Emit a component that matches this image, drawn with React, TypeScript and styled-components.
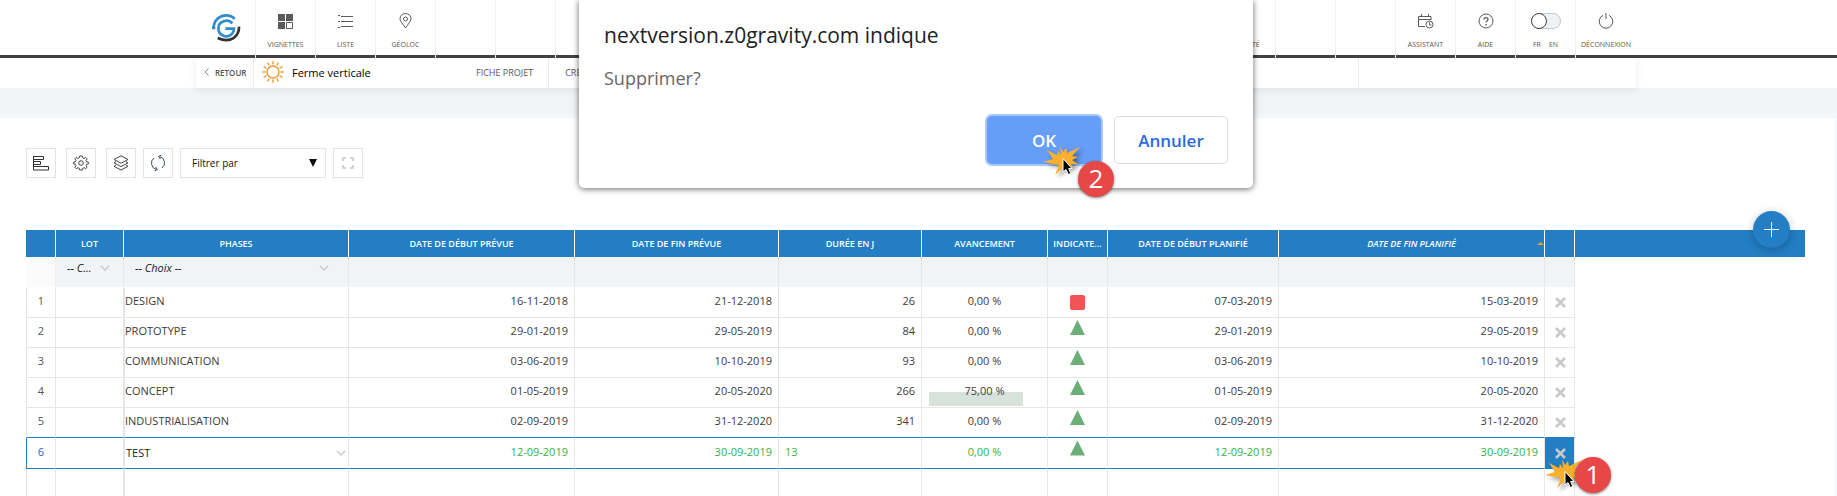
import React from "react";
import styled, { createGlobalStyle, css } from "styled-components";

const blue = "#237ec4";
const line = "#e6e6e6";
const pale = "#f0f4f6";
const gutter = "5px";

const Global = createGlobalStyle`
  *, *::before, *::after { box-sizing: border-box; }
  body { margin: 0; background: #fff; color: #3c3c3c; overflow-x: hidden;
    font-family: "Open Sans", "Noto Sans", sans-serif; font-size: 11px; }
  button, select, input { font: inherit; color: inherit; margin: 0; padding: 0; border: 0; background: none; border-radius: 0; }
  button, select { cursor: pointer; }
  a { color: inherit; text-decoration: none; }
  svg { display: block; flex: none; }
`;

const Page = styled.div`
  position: relative;
  overflow: hidden;
`;

/* ---------- top bar ---------- */

const Header = styled.header`
  padding-right: ${gutter};
  background: linear-gradient(#fff 55px, #424142 55px);
`;

const HeaderInner = styled.nav`
  display: flex;
  justify-content: space-between;
  max-width: 1440px;
  height: 58px;
  margin: 0 auto;
`;

const HeaderGroup = styled.div`
  display: flex;
`;

const cell = css<{ $last?: boolean }>`
  display: flex;
  flex-direction: column;
  align-items: center;
  gap: 10px;
  width: 60px;
  height: 58px;
  padding-top: 13px;
  border-right: ${(p) => (p.$last ? "0" : "1px solid #f0f0f0")};
  color: #555;
  font-size: 7px;
  line-height: 12px;
  white-space: nowrap;
`;

const HeaderLink = styled.a<{ $last?: boolean }>`${cell}`;
const HeaderCell = styled.div<{ $last?: boolean }>`${cell}`;

const IconSlot = styled.span`
  display: grid;
  place-items: center;
  height: 16px;
`;

const SwitchInput = styled.input`
  appearance: none;
  display: block;
  width: 30px;
  height: 16px;
  border: 1px solid #c3cace;
  border-radius: 8px;
  background: #eef2f5;
  &::before {
    content: "";
    display: block;
    width: 16px;
    height: 16px;
    margin: -1px;
    border: 1px solid #444;
    border-radius: 50%;
    background: #fff;
  }
`;

const Languages = styled.label`
  display: flex;
  gap: 8px;
`;

/* ---------- project bar ---------- */

const SubBar = styled.div`
  position: relative;
  padding-right: ${gutter};
  background: #fff;
`;

const SubInner = styled.nav`
  display: flex;
  align-items: stretch;
  max-width: 1440px;
  height: 30px;
  margin: 0 auto;
  box-shadow: 0 2px 8px rgba(0, 0, 0, 0.07);
  clip-path: inset(0 -10px -10px -10px);
`;

const BackLink = styled.a`
  display: flex;
  align-items: center;
  gap: 6px;
  width: 58px;
  padding: 0 0 2px 8px;
  border-right: 1px solid #ececec;
  color: #555;
  font-size: 8px;
  font-weight: 600;
`;

const ProjectName = styled.h1`
  display: flex;
  align-items: center;
  gap: 8px;
  width: 206px;
  margin: 0;
  padding: 0 0 2px 8px;
  color: #000;
  font-size: 11px;
  font-weight: 400;
`;

const Tab = styled.a`
  display: flex;
  align-items: center;
  padding: 0 15px 2px 16px;
  border-right: 1px solid #ececec;
  color: #555;
  font-size: 9px;
  white-space: nowrap;
`;

const TabsRest = styled.div`
  width: 278px;
  margin-left: auto;
  border-left: 1px solid #ececec;
`;

const Band = styled.div`
  height: 30px;
  border-bottom: 5px solid #f4f7f9;
  background: ${pale};
`;

/* ---------- content ---------- */

const Main = styled.main`
  padding: 30px 30px 0 26px;
  border-right: 2px solid #f4f7f9;
`;

const Toolbar = styled.div`
  display: flex;
  gap: 7px;
`;

const ToolGroup = styled.div`
  display: flex;
  gap: 10px;
`;

const ToolButton = styled.button`
  display: grid;
  place-items: center;
  width: 30px;
  height: 30px;
  border: 1px solid #dfe4e6;
`;

const FilterLabel = styled.label`
  position: relative;
  width: 146px;
`;

const FilterSelect = styled.select`
  appearance: none;
  width: 100%;
  height: 30px;
  padding: 0 28px 0 11px;
  border: 1px solid #dfe4e6;
  color: #111;
  font-size: 10px;
`;

const FilterArrow = styled.svg`
  position: absolute;
  top: 11px;
  right: 9px;
  pointer-events: none;
`;

const GridArea = styled.section`
  position: relative;
  margin-top: 52px;
`;

const AddButton = styled.button`
  position: absolute;
  top: -19px;
  right: 15px;
  display: grid;
  place-items: center;
  width: 37px;
  height: 37px;
  border-radius: 50%;
  background: ${blue};
  box-shadow: 0 2px 10px rgba(0, 0, 0, 0.25);
`;

const Table = styled.table`
  width: 100%;
  table-layout: fixed;
  border-collapse: separate;
  border-spacing: 0;
`;

const Col = styled.col<{ $w?: number }>`
  width: ${(p) => (p.$w ? p.$w + "px" : "auto")};
`;

const Th = styled.th<{ $sorted?: boolean; $rest?: boolean }>`
  position: relative;
  height: 27px;
  padding: 0;
  border-right: ${(p) => (p.$rest ? "0" : "1px solid #fff")};
  background: ${blue};
  color: #fff;
  font-size: 9px;
  font-weight: 600;
  font-style: ${(p) => (p.$sorted ? "italic" : "normal")};
  white-space: nowrap;
`;

const SortArrow = styled.svg`
  position: absolute;
  right: 0;
  top: 12px;
`;

const FilterCell = styled.td<{ $corner?: boolean }>`
  height: 31px;
  padding: 0;
  border-right: 1px solid ${(p) => (p.$corner ? "#f0f0f0" : line)};
  border-bottom: 1px solid #fff;
  background: ${(p) => (p.$corner ? "#fbfbfb" : pale)};
  vertical-align: top;
`;

const Picker = styled.label<{ $right: number; $left: number }>`
  display: flex;
  align-items: center;
  height: 22px;
  padding: 0 ${(p) => p.$right}px 0 ${(p) => p.$left}px;
  color: #222;
`;

const PickerSelect = styled.select<{ $italic?: boolean }>`
  appearance: none;
  flex: 1;
  min-width: 0;
  height: 20px;
  padding-bottom: 2px;
  font-style: ${(p) => (p.$italic ? "italic" : "normal")};
`;

const Row = styled.tr<{ $active?: boolean; $next?: boolean }>`
  color: ${(p) => (p.$active ? "#35b244" : "#3c3c3c")};
  --rule: ${(p) => (p.$active || p.$next ? blue : line)};
  --height: ${(p) => (p.$active ? "31px" : "30px")};
`;

const Td = styled.td<{ $align?: "right" | "center"; $edge?: string; $pad?: string }>`
  position: relative;
  height: var(--height);
  padding: ${(p) => p.$pad || "0 6px 4px"};
  border-right: 1px solid ${line};
  border-bottom: 1px solid var(--rule);
  border-left: ${(p) => (p.$edge ? "1px solid " + p.$edge : "0")};
  line-height: 15px;
  text-align: ${(p) => p.$align || "left"};
  white-space: nowrap;
`;

const RowNumber = styled.span<{ $active?: boolean }>`
  color: ${(p) => (p.$active ? "#2a62cc" : "#555")};
`;

const DaysInput = styled.input`
  display: block;
  width: 100%;
  height: 20px;
`;

const Progress = styled.span`
  position: absolute;
  left: 7px;
  bottom: 1px;
  height: 14px;
  background: #d7e2da;
`;

const Percent = styled.span`
  position: relative;
`;

const Status = styled.span<{ $late?: boolean }>`
  display: block;
  width: 15px;
  height: 15px;
  margin: ${(p) => (p.$late ? "0 auto" : "0 auto 10px")};
  border-radius: ${(p) => (p.$late ? "2px" : "0")};
  background: ${(p) => (p.$late ? "#f05454" : "#6bae78")};
  clip-path: ${(p) => (p.$late ? "none" : "polygon(50% 0, 100% 100%, 0 100%)")};
`;

const DeleteButton = styled.button<{ $active?: boolean }>`
  display: grid;
  place-items: center;
  width: 100%;
  height: ${(p) => (p.$active ? "30px" : "29px")};
  padding-left: 2px;
  background: ${(p) => (p.$active ? blue : "none")};
`;

const EmptyTd = styled.td<{ $edge?: boolean }>`
  height: 27px;
  padding: 0;
  border-right: 1px solid ${line};
  border-left: ${(p) => (p.$edge ? "1px solid " + line : "0")};
`;

/* ---------- dialog ---------- */

const DialogLayer = styled.div`
  position: absolute;
  top: 0;
  left: 0;
  right: ${gutter};
  z-index: 5;
  display: flex;
  justify-content: center;
  pointer-events: none;
`;

const Dialog = styled.div`
  display: flex;
  flex-direction: column;
  width: 674px;
  max-width: 100%;
  padding: 20px 25px 24px;
  border-radius: 0 0 5px 5px;
  background: #fff;
  box-shadow: 0 1px 6px rgba(0, 0, 0, 0.6);
  pointer-events: auto;
`;

const DialogTitle = styled.h2`
  margin: 0;
  color: #222;
  font-size: 21px;
  font-weight: 400;
  line-height: 30px;
`;

const DialogText = styled.p`
  margin: 14px 0 24px;
  color: #666;
  font-size: 18px;
  line-height: 28px;
`;

const DialogActions = styled.div`
  display: flex;
  justify-content: flex-end;
  gap: 13px;
`;

const DialogButton = styled.button<{ $primary?: boolean }>`
  position: relative;
  width: 114px;
  height: 48px;
  border: 1px solid ${(p) => (p.$primary ? "#669df6" : "#dadce0")};
  border-radius: 5px;
  background: ${(p) => (p.$primary ? "#669df6" : "#fff")};
  box-shadow: ${(p) => (p.$primary ? "0 0 0 2px #a9c7fa" : "none")};
  color: ${(p) => (p.$primary ? "#fff" : "#2a6ae0")};
  font-size: 17px;
  font-weight: 600;
`;

/* ---------- step markers ---------- */

const Marker = styled.span<{ $x: number; $y: number }>`
  position: absolute;
  left: ${(p) => p.$x}px;
  top: ${(p) => p.$y}px;
  z-index: 2;
  width: 72px;
  height: 32px;
  pointer-events: none;
`;

const Burst = styled.svg`
  filter: drop-shadow(3px 3px 2px rgba(0, 0, 0, 0.4));
`;

const Pointer = styled.svg`
  position: absolute;
  left: 19px;
  top: 11px;
`;

const StepNumber = styled.span<{ $below?: boolean }>`
  position: absolute;
  left: ${(p) => (p.$below ? 35 : 30)}px;
  top: ${(p) => (p.$below ? 15 : -2)}px;
  width: 36px;
  height: 36px;
  border-radius: 50%;
  background: #e84748;
  box-shadow: 0 1px 3px rgba(0, 0, 0, 0.5);
  color: #fff;
  font-size: 26px;
  font-weight: 400;
  line-height: 35px;
  text-align: center;
`;

function Step({ n, x, y, below }: { n: number; x: number; y: number; below?: boolean }) {
  return (
    <Marker $x={x} $y={y}>
      <Burst width="38" height="31" viewBox="0 0 38 31">
        <path
          d="M17 0l3 6 3-4 1 5 13-6-8 9 6 1-6 3 6 4-7 0 2 4-5-2 1 5-5-4-9 8 4-10-6-1-10-2 10-3-6-9 10 5 1-4 3 4z"
          fill="#fbb02d"
        />
      </Burst>
      <StepNumber $below={below}>{n}</StepNumber>
      <Pointer width="11" height="19" viewBox="0 0 11 19">
        <path d="M1 1.500v13.500l3-2.500 2.400 5 2.400-1.200L6.600 11.500H10z" fill="#000" stroke="#fff" />
      </Pointer>
    </Marker>
  );
}

/* ---------- icons ---------- */

const Logo = () => (
  <svg width="30" height="30" viewBox="0 0 90 90" fill="none" strokeWidth="8">
    <path d="M3 45h10M8 45C8 22 26 7 45 7c12 0 20 4 26 11" stroke="#2f8ccb" />
    <path d="M64 31C51 16 22 24 22 46c0 23 27 30 40 18 5-5 7-10 7-17H43" stroke="#2f8ccb" />
    <path d="M84 41c1 28-24 52-64 34" stroke="#333" />
  </svg>
);

const Vignettes = () => (
  <svg width="15" height="15" viewBox="0 0 15 15" fill="#5a5a5a">
    <path d="M0 0h7v7H0zM8 0h7v7H8zM0 8h7v7H0z" />
    <path d="M8.500 8.500h6v6h-6z" fill="#fff" stroke="#5a5a5a" />
  </svg>
);

const List = () => (
  <svg width="16" height="15" viewBox="0 0 16 15" stroke="#5a5a5a">
    <path d="M0 1.500h2M0 7.500h2M0 13.500h2M3 2.500h12M3 7.500h12M3 12.500h12" />
  </svg>
);

const Pin = () => (
  <svg width="13" height="16" viewBox="0 0 13 16" fill="none" stroke="#5a5a5a">
    <path d="M6.500 15C4 11 1 8.500 1 5.800a5.500 5.300 0 0 1 11 0C12 8.500 9 11 6.500 15z" />
    <circle cx="6.500" cy="6" r="2" />
  </svg>
);

const Assistant = () => (
  <svg width="16" height="15" viewBox="0 0 16 15" fill="none" stroke="#5a5a5a">
    <path d="M7 12.500H.5v-10h12.500V6M.5 5.500H13M3.500 0v3M10.500 0v3" />
    <circle cx="11.500" cy="10.500" r="3.500" />
    <path d="M11.500 8.500v2.500h2" />
  </svg>
);

const Help = () => (
  <svg width="16" height="16" viewBox="0 0 16 16" fill="none" stroke="#5a5a5a">
    <circle cx="8" cy="8" r="7" />
    <path d="M6 6.500C6 3.800 10 4 10 6.400 10 8 8 7.900 8 9.500M8 11v1.500" strokeWidth="1.300" />
  </svg>
);

const Power = () => (
  <svg width="16" height="16" viewBox="0 0 16 16" fill="none" stroke="#5a5a5a">
    <path d="M5 2.300a6.800 6.800 0 1 0 6 0M8 0v6" />
  </svg>
);

const Back = () => (
  <svg width="5" height="8" viewBox="0 0 5 8" fill="none" stroke="#888">
    <path d="M4.500.5L1 4l3.500 3.500" />
  </svg>
);

const Sun = () => (
  <svg width="22" height="22" viewBox="-11 -11 22 22" fill="none" stroke="#e79a34">
    <circle r="6" strokeWidth="1.400" />
    {Array.from({ length: 12 }, (_, i) => (
      <path key={i} d="M0-7.500V-10.800" strokeWidth="1.400" transform={`rotate(${i * 30})`} />
    ))}
  </svg>
);

const Chevron = () => (
  <svg width="10" height="6" viewBox="0 0 10 6" fill="none" stroke="#c9cdd0" strokeWidth="1.500">
    <path d="M.8.8L5 5 9.200.8" />
  </svg>
);

const Cross = () => (
  <svg width="11" height="11" viewBox="0 0 11 11" stroke="#c9c9c9" strokeWidth="2.600">
    <path d="M1 1l9 9M10 1l-9 9" />
  </svg>
);

const Plus = () => (
  <svg width="15" height="15" viewBox="0 0 15 15" stroke="#fff">
    <path d="M7.500 0v15M0 7.500h15" />
  </svg>
);

const Bars = () => (
  <svg width="16" height="15" viewBox="0 0 16 15" fill="none" stroke="#333">
    <path d="M.5.5h10v3H.5zM.5 5.500h7v3h-7zM.5 10.500h15v3.500H.5zM.5 0v14" />
  </svg>
);

const Gear = () => (
  <svg width="16" height="16" viewBox="-8 -8 16 16" fill="none" stroke="#444">
    <path d="M-1.300-7h2.600l.4 1.800 1.500.7L4.900-5.600 6.200-4.200 5-2.600l.6 1.400L7.300-1v2l-1.700.4L5 2.800l1.100 1.500-1.400 1.400L3.200 4.700l-1.500.6L1.300 7h-2.600l-.4-1.700-1.500-.6-1.600 1L-6.100 4.300-5 2.800l-.6-1.400L-7.300 1v-2l1.700-.3L-5-2.600-6.200-4.200l1.400-1.400 1.600 1.100 1.500-.7z" />
    <circle r="2.300" />
  </svg>
);

const Layers = () => (
  <svg width="16" height="16" viewBox="0 0 16 16" fill="none" stroke="#444">
    <path d="M8 .8L15 4.500 8 8.200 1 4.500zM3 6.500L1 7.800l7 3.800 7-3.800-2-1.300M3 10L1 11.300 8 15l7-3.700-2-1.300" />
  </svg>
);

const Refresh = () => (
  <svg width="16" height="16" viewBox="0 0 16 16" fill="none" stroke="#3a4a5a">
    <path d="M9.500 1.500A6.500 6.500 0 0 1 12 13M6.500 14.500A6.500 6.500 0 0 1 4 3M11.500 0L8.500 1.500l2 2.500M4.500 16l3-1.500-2-2.500" />
  </svg>
);

const Expand = () => (
  <svg width="12" height="12" viewBox="0 0 12 12" fill="none" stroke="#c4c8ca" strokeWidth="1.500">
    <path d="M1 4V1h3M8 1h3v3M11 8v3H8M4 11H1V8" />
  </svg>
);

/* ---------- phases grid ---------- */

const widths = [30, 68, 225, 226, 204, 143, 126, 60, 171, 266, 30];

const headings = [
  "",
  "LOT",
  "PHASES",
  "DATE DE DÉBUT PRÉVUE",
  "DATE DE FIN PRÉVUE",
  "DURÉE EN J",
  "AVANCEMENT",
  "INDICATE...",
  "DATE DE DÉBUT PLANIFIÉ",
  "DATE DE FIN PLANIFIÉ",
  "",
];

interface Phase {
  name: string;
  start: string;
  end: string;
  days: number;
  done: number;
  from: string;
  to: string;
  late?: boolean;
  active?: boolean;
}

const phases: Phase[] = [
  { name: "DESIGN", start: "16-11-2018", end: "21-12-2018", days: 26, done: 0, late: true, from: "07-03-2019", to: "15-03-2019" },
  { name: "PROTOTYPE", start: "29-01-2019", end: "29-05-2019", days: 84, done: 0, from: "29-01-2019", to: "29-05-2019" },
  { name: "COMMUNICATION", start: "03-06-2019", end: "10-10-2019", days: 93, done: 0, from: "03-06-2019", to: "10-10-2019" },
  { name: "CONCEPT", start: "01-05-2019", end: "20-05-2020", days: 266, done: 75, from: "01-05-2019", to: "20-05-2020" },
  { name: "INDUSTRIALISATION", start: "02-09-2019", end: "31-12-2020", days: 341, done: 0, from: "02-09-2019", to: "31-12-2020" },
  { name: "TEST", start: "12-09-2019", end: "30-09-2019", days: 13, done: 0, from: "12-09-2019", to: "30-09-2019", active: true },
];

function PhaseTable() {
  return (
    <Table>
      <colgroup>
        {widths.map((w, i) => (
          <Col key={i} $w={w} />
        ))}
        <Col />
      </colgroup>
      <thead>
        <tr>
          {headings.map((h, i) => (
            <Th key={i} scope="col" $sorted={i === 9}>
              {h}
              {i === 9 && (
                <SortArrow width="7" height="3" viewBox="0 0 7 3" fill="#f5a11c">
                  <path d="M0 3L3.500 0 7 3z" />
                </SortArrow>
              )}
            </Th>
          ))}
          <Th $rest />
        </tr>
      </thead>
      <tbody>
        <tr>
          <FilterCell $corner />
          <FilterCell>
            <Picker $left={11} $right={13}>
              <PickerSelect $italic aria-label="Filtrer par lot">
                <option>-- C...</option>
              </PickerSelect>
              <Chevron />
            </Picker>
          </FilterCell>
          <FilterCell>
            <Picker $left={11} $right={19}>
              <PickerSelect $italic aria-label="Filtrer par phase">
                <option>-- Choix --</option>
              </PickerSelect>
              <Chevron />
            </Picker>
          </FilterCell>
          {widths.slice(3).map((_, i) => (
            <FilterCell key={i} />
          ))}
        </tr>
        {phases.map((p, i) => (
          <Row key={p.name} $active={p.active} $next={phases[i + 1]?.active}>
            <Td $align="center" $pad="0 0 4px" $edge={p.active ? blue : line}>
              <RowNumber $active={p.active}>{i + 1}</RowNumber>
            </Td>
            <Td />
            <Td $edge={line} $pad={p.active ? "0" : "0 0 4px"}>
              {p.active ? (
                <Picker $left={1} $right={2}>
                  <PickerSelect aria-label="Phase">
                    <option>{p.name}</option>
                  </PickerSelect>
                  <Chevron />
                </Picker>
              ) : (
                p.name
              )}
            </Td>
            <Td $align="right">{p.start}</Td>
            <Td $align="right">{p.end}</Td>
            <Td $align="right">
              {p.active ? <DaysInput aria-label="Durée en jours" defaultValue={p.days} /> : p.days}
            </Td>
            <Td $align="center" $pad="0 0 4px">
              {p.done > 0 && <Progress style={{ width: `${p.done}%` }} />}
              <Percent>{p.done},00 %</Percent>
            </Td>
            <Td $pad="0">
              <Status $late={p.late} />
            </Td>
            <Td $align="right">{p.from}</Td>
            <Td $align="right">{p.to}</Td>
            <Td $pad="0">
              <DeleteButton $active={p.active} aria-label={`Supprimer ${p.name}`}>
                <Cross />
              </DeleteButton>
              {p.active && <Step n={1} x={0} y={21} />}
            </Td>
          </Row>
        ))}
        <tr>
          {widths.map((_, i) => (
            <EmptyTd key={i} $edge={i === 0 || i === 2} />
          ))}
        </tr>
      </tbody>
    </Table>
  );
}

export default function App() {
  return (
    <Page>
      <Global />
      <Header>
        <HeaderInner>
          <HeaderGroup>
            <HeaderLink href="#" aria-label="Accueil">
              <Logo />
            </HeaderLink>
            <HeaderLink href="#">
              <IconSlot><Vignettes /></IconSlot>
              VIGNETTES
            </HeaderLink>
            <HeaderLink href="#">
              <IconSlot><List /></IconSlot>
              LISTE
            </HeaderLink>
            <HeaderLink href="#">
              <IconSlot><Pin /></IconSlot>
              GÉOLOC
            </HeaderLink>
            <HeaderCell />
            <HeaderCell />
          </HeaderGroup>
          <HeaderGroup>
            <HeaderLink href="#">
              <IconSlot />
              QUALITÉ
            </HeaderLink>
            <HeaderCell />
            <HeaderCell />
            <HeaderLink href="#">
              <IconSlot><Assistant /></IconSlot>
              ASSISTANT
            </HeaderLink>
            <HeaderLink href="#">
              <IconSlot><Help /></IconSlot>
              AIDE
            </HeaderLink>
            <HeaderCell>
              <SwitchInput type="checkbox" role="switch" id="langue" />
              <Languages htmlFor="langue">
                <span>FR</span>
                <span>EN</span>
              </Languages>
            </HeaderCell>
            <HeaderLink href="#" $last>
              <IconSlot><Power /></IconSlot>
              DÉCONNEXION
            </HeaderLink>
          </HeaderGroup>
        </HeaderInner>
      </Header>

      <SubBar>
        <SubInner>
          <BackLink href="#">
            <Back />
            RETOUR
          </BackLink>
          <ProjectName>
            <Sun />
            Ferme verticale
          </ProjectName>
          <Tab href="#">FICHE PROJET</Tab>
          <Tab href="#">CRÉDITS</Tab>
          <TabsRest />
        </SubInner>
      </SubBar>
      <Band />

      <Main>
        <Toolbar>
          <ToolGroup>
            <ToolButton aria-label="Gantt"><Bars /></ToolButton>
            <ToolButton aria-label="Paramètres"><Gear /></ToolButton>
            <ToolButton aria-label="Calques"><Layers /></ToolButton>
          </ToolGroup>
          <ToolButton aria-label="Actualiser"><Refresh /></ToolButton>
          <FilterLabel>
            <FilterSelect aria-label="Filtrer par">
              <option>Filtrer par</option>
            </FilterSelect>
            <FilterArrow width="8" height="8" viewBox="0 0 8 8" fill="#111">
              <path d="M0 0h8L4 8z" />
            </FilterArrow>
          </FilterLabel>
          <ToolButton aria-label="Plein écran"><Expand /></ToolButton>
        </Toolbar>

        <GridArea>
          <PhaseTable />
          <AddButton aria-label="Ajouter">
            <Plus />
          </AddButton>
        </GridArea>
      </Main>

      <DialogLayer>
        <Dialog role="alertdialog" aria-labelledby="dialog-title" aria-describedby="dialog-text">
          <DialogTitle id="dialog-title">nextversion.z0gravity.com indique</DialogTitle>
          <DialogText id="dialog-text">Supprimer?</DialogText>
          <DialogActions>
            <DialogButton $primary>
              OK
              <Step n={2} x={55} y={29} below />
            </DialogButton>
            <DialogButton>Annuler</DialogButton>
          </DialogActions>
        </Dialog>
      </DialogLayer>
    </Page>
  );
}
